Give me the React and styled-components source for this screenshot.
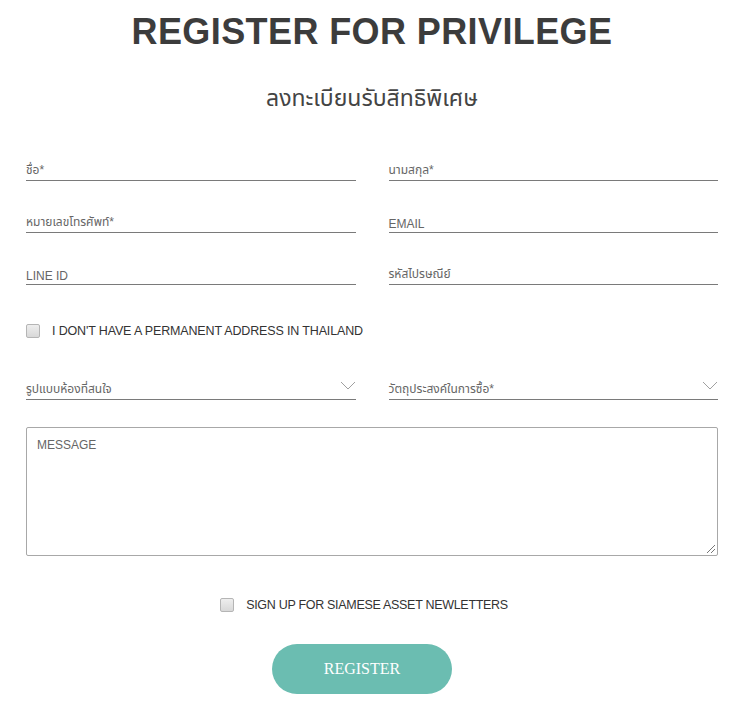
import React from 'react';
import styled, { createGlobalStyle } from 'styled-components';

const GlobalStyle = createGlobalStyle`
    body {
        margin: 0;
        background: #fff;
        font-family: "Liberation Sans", "Noto Sans Thai", "Noto Sans", sans-serif;
    }
`;

const Page = styled.div`
    width: 744px;
    padding: 10px 26px 0;
    box-sizing: border-box;
`;

const Title = styled.h1`
    margin: 0;
    text-align: center;
    font-family: "Liberation Sans", sans-serif;
    font-weight: 700;
    font-size: 36px;
    line-height: 43px;
    letter-spacing: 0.4px;
    color: #3c3c3c;
`;

const SubTitle = styled.h2`
    margin: 30px 0 0;
    text-align: center;
    font-weight: 400;
    font-size: 23px;
    line-height: 30px;
    color: #444;
`;

const FieldGrid = styled.div`
    display: grid;
    grid-template-columns: 1fr 1fr;
    column-gap: 33px;
    row-gap: 22px;
    margin-top: ${p => p.$top}px;
`;

const Field = styled.div`
    height: 30px;
    border-bottom: 1px solid #7a7a7a;
    display: flex;
    align-items: flex-end;
    justify-content: space-between;
    padding-bottom: 1px;
    box-sizing: border-box;
    font-size: 12px;
    color: #666;
`;

const CheckRow = styled.label`
    display: flex;
    align-items: center;
    justify-content: ${p => (p.$center ? 'center' : 'flex-start')};
    gap: 12px;
    margin-top: ${p => p.$top}px;
    padding-right: ${p => (p.$center ? 16 : 0)}px;
    font-size: 12.5px;
    color: #333;
    letter-spacing: ${p => (p.$center ? -0.3 : -0.15)}px;
`;

const Box = styled.span`
    width: 12px;
    height: 12px;
    border: 1px solid #b5b5b5;
    border-radius: 2px;
    background: linear-gradient(#eee, #d8d8d8);
`;

const Chevron = () => (
    <svg width="16" height="10" viewBox="0 0 16 10" style={{ marginBottom: 7 }}>
        <path d="M1 1 L8 8 L15 1" fill="none" stroke="#a0a0a0" strokeWidth="1" />
    </svg>
);

const Message = styled.div`
    position: relative;
    margin-top: 27px;
    height: 129px;
    border: 1px solid #a8a8a8;
    border-radius: 2px;
    padding: 10px 10px;
    box-sizing: border-box;
    font-size: 12px;
    color: #666;
`;

const Grip = styled.svg`
    position: absolute;
    right: 1px;
    bottom: 1px;
`;

const ButtonRow = styled.div`
    display: flex;
    justify-content: center;
    margin-top: 32px;
    padding-right: 20px;
`;

const RegisterButton = styled.button`
    width: 180px;
    height: 50px;
    border: none;
    border-radius: 25px;
    background: #6bbdb1;
    color: #fff;
    font-family: "Liberation Serif", serif;
    font-size: 16px;
`;

const fields = [
    ['ชื่อ*', 'นามสกุล*'],
    ['หมายเลขโทรศัพท์*', 'EMAIL'],
    ['LINE ID', 'รหัสไปรษณีย์'],
];

export default function App() {
    return (
        <Page>
            <GlobalStyle />
            <Title>REGISTER FOR PRIVILEGE</Title>
            <SubTitle>ลงทะเบียนรับสิทธิพิเศษ</SubTitle>

            <FieldGrid $top={38}>
                {fields.flat().map((f, i) => (
                    <Field key={i}>{f}</Field>
                ))}
            </FieldGrid>

            <CheckRow $top={39}>
                <Box />
                I DON'T HAVE A PERMANENT ADDRESS IN THAILAND
            </CheckRow>

            <FieldGrid $top={32}>
                <Field>รูปแบบห้องที่สนใจ<Chevron /></Field>
                <Field>วัตถุประสงค์ในการซื้อ*<Chevron /></Field>
            </FieldGrid>

            <Message>
                MESSAGE
                <Grip width="12" height="12" viewBox="0 0 12 12">
                    <path d="M11 3 L3 11 M11 7 L7 11" stroke="#777" strokeWidth="1" />
                </Grip>
            </Message>

            <CheckRow $center $top={42}>
                <Box />
                SIGN UP FOR SIAMESE ASSET NEWLETTERS
            </CheckRow>

            <ButtonRow>
                <RegisterButton>REGISTER</RegisterButton>
            </ButtonRow>
        </Page>
    );
}
